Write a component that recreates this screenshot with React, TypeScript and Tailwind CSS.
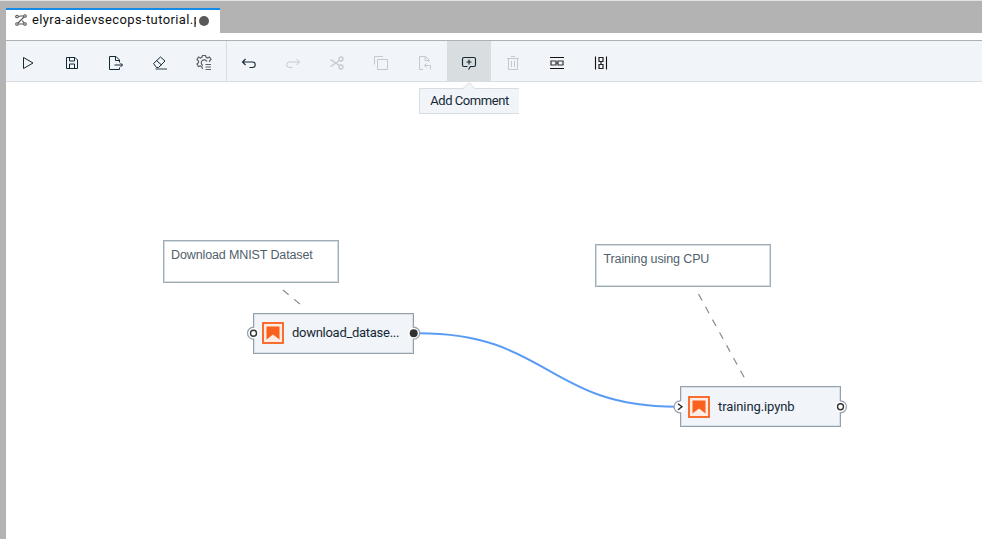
import type { ReactNode } from "react";

function Icon({ children, width = 2 }: { children: ReactNode; width?: number }) {
  return (
    <svg className="size-4" viewBox="0 0 32 32" fill="none" stroke="currentColor" strokeWidth={width}>
      {children}
    </svg>
  );
}

function ToolButton({ label, disabled, active, children }: { label: string; disabled?: boolean; active?: boolean; children: ReactNode }) {
  const tone = disabled ? "text-[#c5c9cc]" : "text-[#152935]";
  const bg = active ? "bg-[#d8dde0]" : "";
  return (
    <button aria-label={label} className={`flex h-10 w-11 shrink-0 items-center justify-center pt-1 ${tone} ${bg}`}>
      {children}
    </button>
  );
}

function Toolbar() {
  return (
    <div className="flex h-[42px] shrink-0 border-y border-t-[#b0b0b0] border-b-[#d8dde1] bg-[#f1f4f9]">
      <ToolButton label="Run"><Icon><path d="M7 5v22l19-11z" strokeLinejoin="round" /></Icon></ToolButton>
      <ToolButton label="Save">
        <Icon><path d="M5 5h17l5 5v17H5zM11 5v7h10V5M11 27v-9h10v9" strokeLinejoin="round" /></Icon>
      </ToolButton>
      <ToolButton label="Export">
        <Icon><path d="M23 25v4H3V3h13l7 7v5M15 3v8h8M13 20h16M25 16l4 4-4 4" strokeLinejoin="round" /></Icon>
      </ToolButton>
      <ToolButton label="Clear">
        <Icon><path d="M3 17L17 4l9 8-13 13H9zM9 11l10 9" strokeLinejoin="round" /><path d="M7 28h23" stroke="#6f7c85" strokeWidth="3" /></Icon>
      </ToolButton>
      <ToolButton label="Settings">
        <svg className="size-4" viewBox="0 0 32 32" fill="none" stroke="#5c6266" strokeWidth="2.4">
          <path d="M13 28l-1-4-3-2-4 1-3-5 3-3v-3L2 9l3-5 4 2 3-2 1-3h6l1 3 3 2 4-2 3 5-3 3v2M14 21a6 6 0 1 1 8-8M19 19h11M19 24h11M19 29h11" />
        </svg>
      </ToolButton>
      <div className="w-px bg-[#d8dde1]" />
      <ToolButton label="Undo"><Icon width={2.2}><path d="M9 8l-6 6 6 6M3 14h20a5 5 0 0 1 0 11h-6" /></Icon></ToolButton>
      <ToolButton label="Redo" disabled><Icon><path d="M23 8l6 6-6 6M29 14H9a5 5 0 0 0 0 11h6" /></Icon></ToolButton>
      <ToolButton label="Cut" disabled>
        <Icon width={2.6}><circle cx="24" cy="8" r="4" /><circle cx="24" cy="24" r="4" /><path d="M21 11L3 23M21 21L3 9" /></Icon>
      </ToolButton>
      <ToolButton label="Copy" disabled><Icon><path d="M9 9h20v20H9zM3 19V3h17" /></Icon></ToolButton>
      <ToolButton label="Paste" disabled>
        <Icon><path d="M12 29H5V3h12l7 7v4M16 3v8h8M19 17l-4 4 4 4M15 21h12v8" /></Icon>
      </ToolButton>
      <ToolButton label="Add Comment" active>
        <Icon width={2.3}><path d="M15 29l4-6h7a3 3 0 0 0 3-3V8a3 3 0 0 0-3-3H6a3 3 0 0 0-3 3v12a3 3 0 0 0 3 3h7M16 9v10M11 14h10" /></Icon>
      </ToolButton>
      <ToolButton label="Delete" disabled>
        <Icon><path d="M12 3h8M4 7h24M7 7v22h18V7M13 12v12M19 12v12" /></Icon>
      </ToolButton>
      <ToolButton label="Arrange Horizontally">
        <svg className="size-4" viewBox="0 0 16 16" fill="none" stroke="#111"><path d="M1 2.5h14M1 13.5h14" strokeWidth="1.1" /><path d="M2 6h5v4H2zM9 6h5v4H9zM7 8h2" stroke="#333" strokeWidth="1.2" /></svg>
      </ToolButton>
      <ToolButton label="Arrange Vertically">
        <svg className="size-4" viewBox="0 0 16 16" fill="none" stroke="#111"><path d="M2.5 1.5v13M13.5 1.5v13" strokeWidth="1.1" /><path d="M6 2.5h4v4H6zM6 9.5h4v4H6zM8 6.5v3" stroke="#222" strokeWidth="1.2" /></svg>
      </ToolButton>
    </div>
  );
}

function NotebookIcon() {
  return (
    <svg className="size-[22px] shrink-0" viewBox="0 0 22 22">
      <rect x="1" y="1" width="20" height="20" fill="#fdece3" stroke="#f9611c" strokeWidth="1.8" />
      <path d="M4.5 4.5h13v13L11 12.5l-6.5 5z" fill="#f9611c" />
    </svg>
  );
}

function Comment({ text, place }: { text: string; place: string }) {
  return (
    <div className={`absolute h-[43px] w-[176px] border border-[#9eacb6] bg-white pt-[5px] pl-[7.5px] font-['Liberation_Sans',sans-serif] text-[12.5px] leading-[18px] tracking-[-0.12px] text-[#50606b] whitespace-nowrap inset-ring inset-ring-[#d3dae0] ${place}`}>
      {text}
    </div>
  );
}

function Node({ text, place, tracking }: { text: string; place: string; tracking: string }) {
  return (
    <div className={`absolute flex h-[41px] w-[161px] items-center gap-2 border border-[#93a1ac] bg-[#f1f4f9] text-[13px] text-[#152935] whitespace-nowrap inset-ring inset-ring-[#d9e0e6] ${place}`}>
      <NotebookIcon />
      <span className={tracking}>{text}</span>
    </div>
  );
}

function Port({ x, y, side, kind }: { x: number; y: number; side: "left" | "right"; kind: "open" | "filled" | "arrow" }) {
  const sweep = side === "left" ? 0 : 1;
  return (
    <g>
      <circle cx={x} cy={y} r="5.5" fill="#fff" />
      <path d={`M${x} ${y - 6}A6 6 0 0 ${sweep} ${x} ${y + 6}`} fill="none" stroke="#93a1ac" strokeWidth="1.2" />
      {kind === "open" && <circle cx={x} cy={y} r="3" fill="#fff" stroke="#333" strokeWidth="1.4" />}
      {kind === "filled" && <circle cx={x} cy={y} r="4" fill="#303030" />}
      {kind === "arrow" && <path d={`M${x - 2} ${y - 3}l4 3-4 3`} fill="none" stroke="#222" strokeWidth="1.3" />}
    </g>
  );
}

function Canvas() {
  return (
    <div className="relative flex-1 bg-white">
      <Comment text="Download MNIST Dataset" place="left-[156.5px] top-[158px]" />
      <Comment text="Training using CPU" place="left-[589px] top-[162px]" />
      <Node text="download_datase..." place="left-[247px] top-[231px] pl-2 pb-px" tracking="tracking-[-0.28px]" />
      <Node text="training.ipynb" place="left-[674px] top-[304px] pl-[7px]" tracking="tracking-[-0.1px]" />
      <svg className="absolute inset-0 size-full" viewBox="6 82 976 457" fill="none">
        <path d="M283 290L301 305" stroke="#8a8a8a" strokeWidth="1.2" strokeDasharray="7.3 7.3" />
        <path d="M698.5 294L744.5 378" stroke="#8a8a8a" strokeWidth="1.2" strokeDasharray="7.3 7.3" />
        <path d="M419 333.3C548 333.3 548 406.7 676 406.7" stroke="#5a9cf5" strokeWidth="2" />
        <Port x={253.5} y={333.2} side="left" kind="open" />
        <Port x={413.7} y={333.2} side="right" kind="filled" />
        <Port x={680} y={406.8} side="left" kind="arrow" />
        <Port x={840.5} y={406.8} side="right" kind="open" />
      </svg>
      <div className="absolute top-[6px] left-[413px] flex h-[26px] w-[100px] items-center justify-center border border-r-0 border-[#d8dde1] bg-[#f1f4f9] text-[13px] text-[#152935] whitespace-nowrap">
        <svg className="absolute -top-[7px] left-[41px] h-[8px] w-[16px]" viewBox="0 0 16 8"><path d="M1 7.5L8 .7l7 6.8" fill="#f1f4f9" stroke="#d8dde1" /></svg>
        <span className="tracking-[-0.45px]">Add Comment</span>
      </div>
    </div>
  );
}

export default function App() {
  return (
    <div className="flex h-[539px] w-[982px] flex-col overflow-hidden border-t border-t-[#e2e2e2] bg-[#b3b3b3] pl-1.5 font-['Roboto',sans-serif]">
      <div className="flex h-8 shrink-0 items-end">
        <div className="mt-[7px] flex h-[25px] w-[214px] items-center border-t-2 border-[#168be6] bg-white pl-[9px] text-[13px] text-[#111]">
          <svg className="mr-[5px] mb-[3px] size-3 shrink-0" viewBox="0 0 12 12" fill="none" stroke="#555" strokeWidth="1.1">
            <circle cx="2" cy="2.5" r="1.3" /><circle cx="10" cy="2" r="1.3" /><circle cx="2" cy="10" r="1.3" /><circle cx="10" cy="10" r="1.3" />
            <path d="M3.3 2.5L6 2h2.7M9 3L3 9M3.3 10h5.4M7.2 6.6l2 2.2" />
          </svg>
          <span className="w-[164px] overflow-hidden pb-[3px] tracking-[0.38px] whitespace-nowrap">elyra-aidevsecops-tutorial.p</span>
          <span className="mb-[2px] ml-[3px] size-[10px] shrink-0 rounded-full bg-[#595959]" />
        </div>
      </div>
      <div className="h-[7px] shrink-0 bg-white" />
      <Toolbar />
      <Canvas />
    </div>
  );
}
